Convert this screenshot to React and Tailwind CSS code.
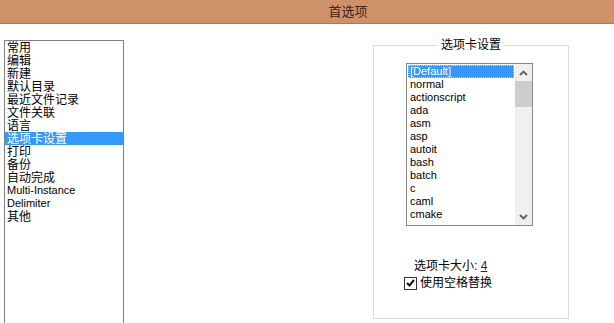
import React from "react";

const navItems = [
  "常用",
  "编辑",
  "新建",
  "默认目录",
  "最近文件记录",
  "文件关联",
  "语言",
  "选项卡设置",
  "打印",
  "备份",
  "自动完成",
  "Multi-Instance",
  "Delimiter",
  "其他",
];

const langs = [
  "[Default]",
  "normal",
  "actionscript",
  "ada",
  "asm",
  "asp",
  "autoit",
  "bash",
  "batch",
  "c",
  "caml",
  "cmake",
];

const isLatin = (s) => /^[\x00-\x7f]+$/.test(s);

function Chevron({ up }) {
  return (
    <svg width="9" height="6" viewBox="0 0 9 6">
      <polyline
        points={up ? "1,5 4.5,1.5 8,5" : "1,1 4.5,4.5 8,1"}
        fill="none"
        stroke="#606060"
        strokeWidth="1.8"
      />
    </svg>
  );
}

export default function App() {
  return (
    <div className="w-[614px] h-[323px] overflow-hidden bg-white text-black font-['Liberation_Sans','Noto_Sans_CJK_SC',sans-serif]">
      {/* title bar */}
      <div className="h-[24px] bg-[#cf916a] border-b border-[#b27552] flex items-center justify-center pl-[82px]">
        <span className="text-[13px] leading-[16px] text-[#3b2619]">首选项</span>
      </div>

      <div className="flex items-start">
        {/* page list */}
        <div className="ml-[4px] mt-[16px] w-[120px] h-[300px] border border-[#7f7f7f]">
          {navItems.map((t, i) => (
            <div
              key={t}
              className={`h-[13px] pl-[2px] whitespace-nowrap ${
                isLatin(t) ? "text-[11px] leading-[13px]" : "text-[12px] leading-[14px]"
              } ${i === 7 ? "bg-[#3399ff] text-white" : ""}`}
            >
              {t}
            </div>
          ))}
        </div>

        {/* tab settings group */}
        <fieldset className="ml-auto mr-[45px] mt-[14px] w-[196px] h-[281px] border border-[#dcdcdc]">
          <legend className="mx-auto px-[3px] text-[12px] leading-[14px]">选项卡设置</legend>

          <div className="ml-[32px] mt-[11px] w-[127px] h-[163px] border border-[#828790] flex">
            <div className="flex-1 p-[1px] overflow-hidden">
              {langs.map((t, i) => (
                <div
                  key={t}
                  className={`h-[13px] pl-[2px] text-[11px] leading-[13px] whitespace-nowrap ${
                    i === 0 ? "bg-[#3399ff] text-white outline outline-1 outline-dotted outline-[#bcdcff] -outline-offset-1" : ""
                  }`}
                >
                  {t}
                </div>
              ))}
            </div>
            <div className="w-[17px] bg-[#f0f0f0] flex flex-col">
              <div className="h-[17px] flex items-center justify-center">
                <Chevron up />
              </div>
              <div className="h-[26px] bg-[#cdcdcd]" />
              <div className="flex-1" />
              <div className="h-[17px] flex items-center justify-center">
                <Chevron />
              </div>
            </div>
          </div>

          <div className="mt-[33px] pl-[40px] text-[12px] leading-[14px] whitespace-nowrap">
            选项卡大小: <span className="text-[#1c1c8a] underline">4</span>
          </div>
          <div className="mt-[3px] pl-[30px] flex items-center gap-[3px] text-[12px] leading-[14px]">
            <span className="w-[13px] h-[13px] border border-[#333] bg-white flex items-center justify-center">
              <svg width="9" height="8" viewBox="0 0 9 8">
                <polyline points="1,4 3.5,6.5 8,1" fill="none" stroke="#111" strokeWidth="2" />
              </svg>
            </span>
            <span>使用空格替换</span>
          </div>
        </fieldset>
      </div>
    </div>
  );
}
